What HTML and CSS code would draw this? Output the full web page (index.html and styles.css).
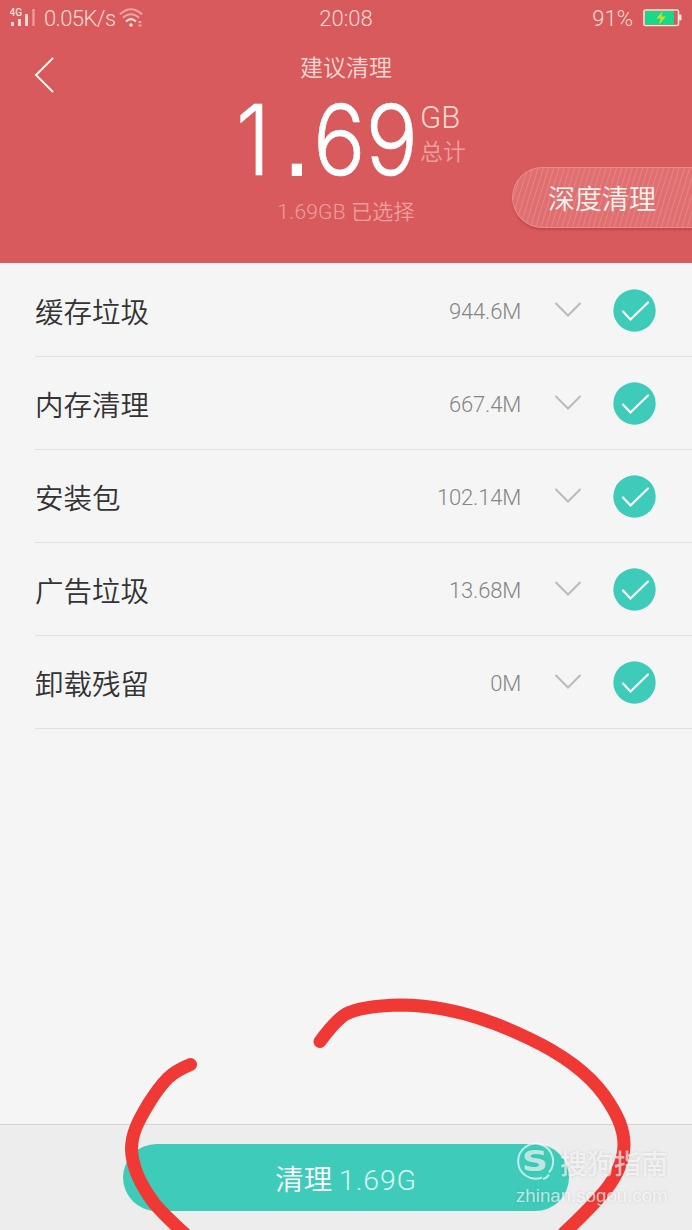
FILE: index.html
```html
<!DOCTYPE html>
<html lang="zh-CN">
<head>
  <meta charset="UTF-8">
  <meta name="viewport" content="width=device-width, initial-scale=1.0">
  <title>建议清理</title>
  <link rel="stylesheet" href="styles.css">
</head>
<body>
  <div class="screen">
    <div class="header">
      <div class="status-bar">
        <div class="status-left">
          <svg class="signal" width="26" height="20" viewBox="0 0 26 20">
            <text x="-0.5" y="8" class="signal-text">4G</text>
            <path d="M2.5 14v4M9.5 11v7M16.5 6v12" stroke="#ffe3dc" stroke-width="2.8"/>
            <path d="M23.5 1v17" stroke="#ee9a99" stroke-width="2.4"/>
          </svg>
          <span class="speed">0.05K/s</span>
          <svg class="wifi" width="24" height="20" viewBox="0 0 24 20" fill="none" stroke-width="2">
            <path d="M1 6.2Q12 -3.8 23 6.2M3.8 9.8Q12 2.6 20.2 9.8" stroke="#f1a3a0"/>
            <path d="M7 13.5Q12 8.8 17 13.5" stroke="#ffe3dc"/>
            <circle cx="12" cy="17" r="1.7" fill="#ffe3dc"/>
            <path d="M19.5 14h3M19.5 17.5h3" stroke="#f1a3a0"/>
          </svg>
        </div>
        <div class="clock">20:08</div>
        <div class="status-right">
          <span>91%</span>
          <svg class="battery" width="39" height="18" viewBox="0 0 39 18">
            <rect x="1" y="1" width="34.5" height="15.5" rx="1.5" fill="none" stroke="#ffe0d8" stroke-width="1.6"/>
            <rect x="2" y="2" width="29" height="13.5" fill="#18d98a"/>
            <path d="M36.5 6h1.5v5h-1.5z" fill="#ffe0d8" stroke="#ffe0d8"/>
            <path d="M19.5 2l-6 7.5h4l-1.5 6 7-8h-4.5z" fill="#c8dc28"/>
          </svg>
        </div>
      </div>

      <div class="hero">
        <svg class="back" width="22" height="38" viewBox="0 0 22 38" fill="none">
          <path d="M19 2L2 19l17 17" stroke="#fff3ec" stroke-width="2"/>
        </svg>
        <div class="summary">
          <div class="title">建议清理</div>
          <div class="total">
            <div class="number"><span class="integer">1</span><span class="dot">.</span>69</div>
            <div class="unit">
              <span class="gb">GB</span>
              <span class="sum">总计</span>
            </div>
          </div>
          <div class="selected">1.69GB 已选择</div>
        </div>
        <div class="deep-clean">深度清理</div>
      </div>
    </div>

    <div class="list">
      <div class="row">
        <span class="name">缓存垃圾</span>
        <span class="size">944.6M</span>
        <svg class="arrow" width="28" height="18" viewBox="0 0 28 18"><path d="M1.5 2L14 14.5 26.5 2"/></svg>
        <svg class="check" width="43" height="43" viewBox="0 0 43 43"><circle cx="21.5" cy="21.5" r="21.2"/><path d="M10 22.5l7.5 8L35 13.5"/></svg>
      </div>
      <div class="row">
        <span class="name">内存清理</span>
        <span class="size">667.4M</span>
        <svg class="arrow" width="28" height="18" viewBox="0 0 28 18"><path d="M1.5 2L14 14.5 26.5 2"/></svg>
        <svg class="check" width="43" height="43" viewBox="0 0 43 43"><circle cx="21.5" cy="21.5" r="21.2"/><path d="M10 22.5l7.5 8L35 13.5"/></svg>
      </div>
      <div class="row">
        <span class="name">安装包</span>
        <span class="size">102.14M</span>
        <svg class="arrow" width="28" height="18" viewBox="0 0 28 18"><path d="M1.5 2L14 14.5 26.5 2"/></svg>
        <svg class="check" width="43" height="43" viewBox="0 0 43 43"><circle cx="21.5" cy="21.5" r="21.2"/><path d="M10 22.5l7.5 8L35 13.5"/></svg>
      </div>
      <div class="row">
        <span class="name">广告垃圾</span>
        <span class="size">13.68M</span>
        <svg class="arrow" width="28" height="18" viewBox="0 0 28 18"><path d="M1.5 2L14 14.5 26.5 2"/></svg>
        <svg class="check" width="43" height="43" viewBox="0 0 43 43"><circle cx="21.5" cy="21.5" r="21.2"/><path d="M10 22.5l7.5 8L35 13.5"/></svg>
      </div>
      <div class="row">
        <span class="name">卸载残留</span>
        <span class="size">0M</span>
        <svg class="arrow" width="28" height="18" viewBox="0 0 28 18"><path d="M1.5 2L14 14.5 26.5 2"/></svg>
        <svg class="check" width="43" height="43" viewBox="0 0 43 43"><circle cx="21.5" cy="21.5" r="21.2"/><path d="M10 22.5l7.5 8L35 13.5"/></svg>
      </div>
    </div>

    <div class="footer">
      <div class="clean-button"><span>清理</span> <span class="amount">1.69G</span></div>
    </div>

    <!-- hand-drawn circle around the button -->
    <svg class="marker" width="692" height="250" viewBox="0 980 692 250">
      <path d="M320 1041.5C327 1032 336 1020 346 1014C357 1008 380 1005.5 401 1005C450 1005 495 1022 528 1038C560 1053 588 1073 604 1095C618 1115 624 1129 624 1145C624 1163 613 1182 603 1193C593 1205 580 1218 564 1233"/>
      <path d="M190.5 1064.5C182 1068 174 1072 168 1078C160 1086 154 1095 149 1103C138 1121 131.5 1134 131.5 1149C132 1167 142 1187 154 1203C162 1213 173 1223 186 1235"/>
    </svg>

    <div class="watermark">
      <div class="brand">
        <svg class="logo" width="38" height="40" viewBox="0 0 38 40">
          <path d="M33 30.500A17.500 17.500 0 1 0 26 35.500M27 37q4-1 6-4.500" fill="none" stroke="currentColor" stroke-width="2"/>
          <text x="14.6" y="29.5" class="logo-text">S</text>
        </svg>
        <span>搜狗指南</span>
      </div>
      <div class="site">zhinan.sogou.com</div>
    </div>
  </div>
</body>
</html>
```
FILE: styles.css
```css
body {
  margin: 0;
  font-family: Roboto, "Noto Sans CJK SC", sans-serif;
  font-weight: 350;
}
.screen {
  position: relative;
  display: flex;
  flex-direction: column;
  height: 1230px;
  background-color: #f5f5f5;
  overflow: hidden;
}
.header {
  height: 263px;
  background-color: #d85a5c;
  color: #ffd9d2;
}
.status-bar {
  display: grid;
  grid-template-columns: 1fr auto 1fr;
  align-items: center;
  height: 36px;
  padding: 0 10px;
  font-size: 22px;
}
.status-left,
.status-right {
  display: flex;
  align-items: center;
}
.status-right {
  justify-content: flex-end;
  gap: 10px;
}
.signal-text {
  font-size: 10px;
  font-weight: 500;
  fill: #ffe3dc;
}
.speed {
  margin: 0 4px 0 8px;
  letter-spacing: -0.6px;
}
.hero {
  display: grid;
  grid-template-columns: 180px 1fr 180px;
  height: 227px;
}
.back {
  margin: 20px 0 0 34px;
}
.summary {
  display: flex;
  flex-direction: column;
  align-items: center;
}
.title {
  margin-top: 16px;
  font-size: 23px;
  line-height: 34px;
}
.total {
  display: flex;
  align-self: flex-start;
  height: 86px;
  margin-left: 56px;
}
.number {
  width: 182px;
  color: #fff;
  font-family: Inter, sans-serif;
  font-size: 97px;
  line-height: 108px;
  font-weight: 300;
  white-space: nowrap;
  transform: scaleX(0.9);
  transform-origin: left;
  -webkit-text-stroke: 0.6px #fff;
}
.integer {
  letter-spacing: 16px;
}
.dot {
  font-family: "Liberation Sans", sans-serif;
  letter-spacing: 4.5px;
  line-height: 0;
  -webkit-text-stroke: 2px #fff;
}
.unit {
  display: flex;
  flex-direction: column;
  padding-top: 14px;
  margin-left: 2px;
}
.gb {
  font-size: 31px;
  line-height: 36px;
}
.sum {
  font-size: 23px;
  line-height: 34px;
  color: #ee9f9c;
}
.selected {
  margin-top: 25px;
  font-size: 21px;
  line-height: 30px;
  letter-spacing: 0.2px;
  color: #ee9f9c;
}
.deep-clean {
  align-self: end;
  box-sizing: border-box;
  height: 61px;
  margin-bottom: 35px;
  padding-left: 35px;
  border: 1px solid #e98d8b;
  border-right: none;
  border-radius: 31px 0 0 31px;
  background: repeating-linear-gradient(107deg, #df6f70 0, #df6f70 3px, #e58584 4px, #df6f70 5px);
  box-shadow: 0 2px 2px rgba(150, 40, 45, 0.35);
  color: #fff3ef;
  font-size: 27px;
  line-height: 64px;
}
.list {
  flex: 1;
}
.row {
  display: flex;
  align-items: center;
  box-sizing: border-box;
  height: 93px;
  margin-left: 35px;
  padding-right: 36px;
  border-bottom: 1px solid #e0e0e0;
}
.list .row:first-child {
  height: 94px;
  padding-top: 1px;
}
.name {
  flex: 1;
  padding-top: 7px;
  color: #333;
  font-size: 28.5px;
  line-height: 40px;
}
.size {
  padding-top: 2px;
  color: #858585;
  font-size: 22px;
  letter-spacing: -0.2px;
}
.arrow {
  margin: 0 31px 0 33px;
  fill: none;
  stroke: #bababa;
  stroke-width: 2;
}
.check circle {
  fill: #3fcbb9;
}
.check path {
  fill: none;
  stroke: #fff;
  stroke-width: 2.2;
  stroke-linecap: round;
}
.footer {
  display: flex;
  justify-content: center;
  box-sizing: border-box;
  height: 106px;
  padding-top: 19px;
  border-top: 1px solid #d2d2d2;
  background-color: #ededed;
}
.clean-button {
  width: 446px;
  height: 67px;
  border-radius: 34px;
  background-color: #3fcbb9;
  color: #fff;
  font-size: 28.5px;
  line-height: 74px;
  text-align: center;
}
.amount {
  color: #d8fbf4;
  font-weight: 300;
  letter-spacing: 0.8px;
}
.marker {
  position: absolute;
  left: 0;
  bottom: 0;
  fill: none;
  stroke: #f03835;
  stroke-width: 13;
  stroke-linecap: round;
}
.watermark {
  position: absolute;
  left: 516px;
  top: 1142px;
  color: rgba(255, 255, 255, 0.68);
  text-shadow: 0 0 3px rgba(0, 0, 0, 0.14);
}
.brand {
  display: flex;
  align-items: center;
  gap: 6px;
  height: 40px;
  font-size: 27px;
  font-weight: 500;
}
.logo-text {
  fill: currentColor;
  font-family: "DejaVu Sans", sans-serif;
  font-size: 28px;
  font-weight: bold;
  text-anchor: middle;
  transform: scaleX(1.3);
}
.site {
  font-family: "Liberation Sans", sans-serif;
  font-size: 18.7px;
  font-weight: 400;
  line-height: 28px;
}
```
